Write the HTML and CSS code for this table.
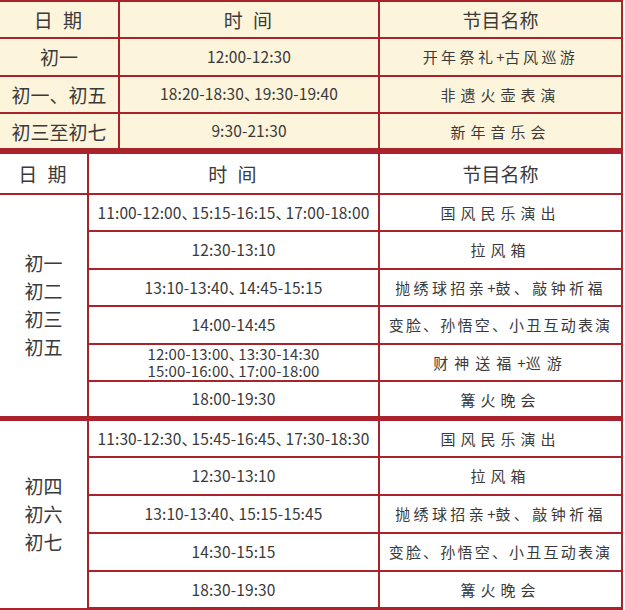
FILE: index.html
```html
<!DOCTYPE html>
<html lang="zh-CN">
<head>
<meta charset="utf-8">
<title>节目表</title>
<link rel="stylesheet" href="styles.css">
</head>
<body>
<div class="sheet">
  <table class="tbl tbl-top">
    <colgroup>
      <col class="c-date1"><col class="c-time1"><col class="c-name">
    </colgroup>
    <tr class="row">
      <th class="head sp-head">日 期</th>
      <th class="head sp-head">时 间</th>
      <th class="head">节目名称</th>
    </tr>
    <tr class="row">
      <td class="date">初一</td>
      <td class="time">12:00-12:30</td>
      <td class="name sp-m">开年祭礼<span class="plus">+</span>古风巡游</td>
    </tr>
    <tr class="row">
      <td class="date">初一<span class="dun-d">、</span>初五</td>
      <td class="time">18:20-18:30<span class="dun">、</span>19:30-19:40</td>
      <td class="name sp-w">非遗火壶表演</td>
    </tr>
    <tr class="row">
      <td class="date">初三至初七</td>
      <td class="time">9:30-21:30</td>
      <td class="name sp-w">新年音乐会</td>
    </tr>
  </table>

  <table class="tbl tbl-main">
    <colgroup>
      <col class="c-date2"><col class="c-time2"><col class="c-name">
    </colgroup>
    <tr class="row row-head">
      <th class="head sp-head">日 期</th>
      <th class="head sp-head">时 间</th>
      <th class="head">节目名称</th>
    </tr>
    <tr class="row">
      <td class="date group" rowspan="6">初一<br>初二<br>初三<br>初五</td>
      <td class="time">11:00-12:00<span class="dun">、</span>15:15-16:15<span class="dun">、</span>17:00-18:00</td>
      <td class="name sp-w">国风民乐演出</td>
    </tr>
    <tr class="row">
      <td class="time">12:30-13:10</td>
      <td class="name sp-w">拉风箱</td>
    </tr>
    <tr class="row">
      <td class="time">13:10-13:40<span class="dun">、</span>14:45-15:15</td>
      <td class="name sp-m">抛绣球招亲<span class="plus">+</span>鼓、敲钟祈福</td>
    </tr>
    <tr class="row">
      <td class="time">14:00-14:45</td>
      <td class="name sp-t">变脸、孙悟空、小丑互动表演</td>
    </tr>
    <tr class="row">
      <td class="time two">12:00-13:00<span class="dun">、</span>13:30-14:30<br>15:00-16:00<span class="dun">、</span>17:00-18:00</td>
      <td class="name sp-xw">财神送福<span class="plus">+</span>巡游</td>
    </tr>
    <tr class="row">
      <td class="time">18:00-19:30</td>
      <td class="name sp-w">篝火晚会</td>
    </tr>
    <tr class="row row-g2 row-split">
      <td class="date group" rowspan="5">初四<br>初六<br>初七</td>
      <td class="time">11:30-12:30<span class="dun">、</span>15:45-16:45<span class="dun">、</span>17:30-18:30</td>
      <td class="name sp-w">国风民乐演出</td>
    </tr>
    <tr class="row row-g2">
      <td class="time">12:30-13:10</td>
      <td class="name sp-w">拉风箱</td>
    </tr>
    <tr class="row row-g2">
      <td class="time">13:10-13:40<span class="dun">、</span>15:15-15:45</td>
      <td class="name sp-m">抛绣球招亲<span class="plus">+</span>鼓、敲钟祈福</td>
    </tr>
    <tr class="row row-g2">
      <td class="time">14:30-15:15</td>
      <td class="name sp-t">变脸、孙悟空、小丑互动表演</td>
    </tr>
    <tr class="row row-g2">
      <td class="time">18:30-19:30</td>
      <td class="name sp-w">篝火晚会</td>
    </tr>
  </table>
</div>
</body>
</html>
```

FILE: styles.css
```css
html, body {
  margin: 0;
  padding: 0;
  background: #ffffff;
}

body {
  font-family: "Noto Sans CJK SC", "Noto Sans", sans-serif;
  color: #3a3a3a;
  width: 625px;
  height: 610px;
  overflow: hidden;
}

.sheet {
  width: 623px;
}

.tbl {
  width: 100%;
  border-collapse: collapse;
  table-layout: fixed;
}

.tbl th,
.tbl td {
  border: 2px solid #a8232b;
  padding: 0;
  text-align: center;
  vertical-align: middle;
  white-space: nowrap;
}

.tbl tr > :first-child {
  border-left: none;
}

.tbl-top {
  background: #fdf4dc;
}

.tbl-top .row {
  height: 37.3px;
}

.tbl-top tr:last-child td {
  border-bottom-width: 4px;
}

.tbl-main {
  background: #ffffff;
}

.tbl-main .row {
  height: 37.5px;
}

.tbl-main .row-head {
  height: 40.5px;
}

.tbl-main .row-g2 {
  height: 38px;
}

.tbl-main .row-split td {
  border-top-width: 5px;
}

.tbl-main tr:last-child td {
  border-bottom-width: 3px;
}

.c-date1 { width: 119px; }
.c-time1 { width: 260px; }
.c-date2 { width: 88px; }
.c-time2 { width: 291px; }
.c-name  { width: auto; }

.head {
  font-weight: 400;
  font-size: 19px;
  line-height: 1;
}

.sp-head {
  letter-spacing: 2px;
  word-spacing: 2px;
}

.date {
  font-size: 19px;
  line-height: 1;
}

.date.group {
  line-height: 28px;
}

.dun-d {
  letter-spacing: -5px;
  margin-right: 5px;
}

.time {
  font-size: 15.5px;
  letter-spacing: 0.1px;
  line-height: 1;
}

.time.two {
  font-size: 15px;
  line-height: 17.5px;
}

.dun {
  letter-spacing: -5.5px;
}

.name {
  font-size: 15px;
  line-height: 1;
}

.plus {
  letter-spacing: 0;
}

.sp-t  { letter-spacing: 2.2px; }
.sp-m  { letter-spacing: 3.4px; }
.sp-w  { letter-spacing: 5px; }
.sp-xw { letter-spacing: 6px; }
```
